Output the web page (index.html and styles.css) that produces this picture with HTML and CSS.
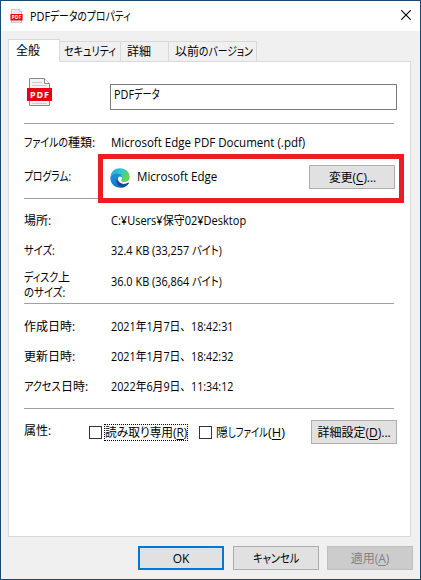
FILE: index.html
```html
<!DOCTYPE html>
<html lang="ja">
<head>
<meta charset="utf-8">
<title>PDFデータのプロパティ</title>
<link rel="stylesheet" href="styles.css">
</head>
<body>
<svg class="defs" width="0" height="0">
  <symbol id="pdf" viewBox="0 0 25 28">
    <path d="M2.500.5h15l5 5v22h-20z" fill="#f4f4f4" stroke="#888"/>
    <path d="M17.500.5v5h5" fill="#fff" stroke="#888"/>
    <path d="M5 4.500h10M5 7.500h15M5 25.500h15" stroke="#ccc"/>
    <path d="M0 10h25v13H0z" fill="#e60012"/>
    <text x="3" y="20" textLength="19" lengthAdjust="spacing" class="pdf-word">PDF</text>
  </symbol>
</svg>
<main class="window">
  <header class="titlebar">
    <svg class="title-icon" viewBox="0 0 25 28"><use href="#pdf"/></svg>
    <h1><span class="fit" data-w="20">PDF</span><span class="fit" data-w="81">データのプロパティ</span></h1>
    <svg class="close" viewBox="0 0 10 10"><path d="M.3.3l9.400 9.400M9.700.3L.3 9.700" stroke="#000" stroke-width="1.100"/></svg>
  </header>
  <nav class="tabs">
    <span class="tab active"><span class="fit" data-w="24">全般</span></span>
    <span class="tab security"><span class="fit" data-w="52">セキュリティ</span></span>
    <span class="tab details"><span class="fit" data-w="24">詳細</span></span>
    <span class="tab versions"><span class="fit" data-w="24">以前</span><span class="fit" data-w="54">のバージョン</span></span>
  </nav>
  <section class="panel">
    <div class="file">
      <svg class="file-icon" viewBox="0 0 25 28"><use href="#pdf"/></svg>
      <div class="name"><span class="fit" data-w="20">PDF</span><span class="fit" data-w="26">データ</span></div>
    </div>
    <div class="group kind">
      <div class="row type"><span class="label"><span class="fit" data-w="44">ファイルの</span><span class="fit" data-w="27">種類:</span></span><span class="fit" data-w="194">Microsoft Edge PDF Document (.pdf)</span></div>
      <div class="row program"><span class="label"><span class="fit" data-w="47">プログラム:</span></span>
        <svg class="edge" viewBox="0 0 20 20">
          <defs>
            <linearGradient id="top" x1="0" y1="0" x2="1" y2=".5"><stop offset="0" stop-color="#1ba5dc"/><stop offset=".5" stop-color="#30c5ce"/><stop offset="1" stop-color="#67d64b"/></linearGradient>
            <linearGradient id="left" x1="0" y1="0" x2=".6" y2="1"><stop offset="0" stop-color="#1a96dc"/><stop offset="1" stop-color="#1270c4"/></linearGradient>
          </defs>
          <path d="M.4 9C1 3.500 5 .3 10 .3c5.700 0 9.700 4 9.700 8.500 0 3.400-2.300 5.200-5.100 5.200-2.200 0-3.900-.8-3.400-1.600 1.500-2.100.8-5.500-2.600-6C5 6 1.500 7 .4 9z" fill="url(#top)"/>
          <path d="M.3 10C.5 7 3.800 5.200 7.400 5.400c2.900.1 4.800 2 4.700 4.300-.1 1.200-.6 1.900-1 2.600-.8 1.900 3.300 3.800 7.300 2.500.5-.1.600.2.400.5C17 18.200 13.800 19.800 10.500 19.800 4.800 19.800.2 15.500.3 10z" fill="url(#left)"/>
          <path d="M7.200 10.200c-1 1.800-1.200 4.800 1 7 1.300 1.300 3 2.200 4.700 2.200 2.400-.6 4.600-2 5.900-4.100.3-.5-.1-.8-.6-.6-4.700 1.800-8.500-.3-8-2.200-1.300-.1-2.500-.9-3-2.300z" fill="#124c9c"/>
          <path d="M9.500 8.500c-1.700.5-2.300 2.700-1 4.600 1.600 2.300 5 3.700 8.700 2.400-3 0-6.300-1.300-6.100-3 .1-.6.900-1.300.9-2.500 0-1-1.200-1.900-2.500-1.500z" fill="#fff"/>
        </svg>
        <span class="fit" data-w="80">Microsoft Edge</span>
        <button class="change"><span class="fit" data-w="47">変更(<u>C</u>)...</span></button>
        <i class="highlight"></i>
      </div>
    </div>
    <div class="group storage">
      <div class="row"><span class="label"><span class="fit" data-w="27">場所:</span></span><span class="fit" data-w="135">C:¥Users¥保守02¥Desktop</span></div>
      <div class="row size"><span class="label"><span class="fit" data-w="31">サイズ:</span></span><span class="fit" data-w="81">32.4 KB (33,257 </span><span class="fit" data-w="30">バイト)</span></div>
      <div class="row disk"><span class="label"><span class="fit" data-w="34">ディスク</span><span class="fit" data-w="12">上</span><br><span class="fit" data-w="41">のサイズ:</span></span><span class="fit" data-w="81">36.0 KB (36,864 </span><span class="fit" data-w="30">バイト)</span></div>
    </div>
    <div class="group dates">
      <div class="row"><span class="label"><span class="fit" data-w="51">作成日時:</span></span><span class="fit day" data-w="80">2021年1月7日、</span><span class="fit" data-w="42">18:42:31</span></div>
      <div class="row"><span class="label"><span class="fit" data-w="51">更新日時:</span></span><span class="fit day" data-w="80">2021年1月7日、</span><span class="fit" data-w="42">18:42:32</span></div>
      <div class="row"><span class="label"><span class="fit" data-w="37">アクセス</span><span class="fit" data-w="27">日時:</span></span><span class="fit day" data-w="80">2022年6月9日、</span><span class="fit" data-w="42">11:34:12</span></div>
    </div>
    <div class="attributes">
      <span class="attr-label"><span class="fit" data-w="27">属性:</span></span>
      <span class="box"></span><span class="focus"><span class="fit" data-w="82">読み取り専用(<u>R</u>)</span></span>
      <span class="box hidden-box"></span><span class="hidden-label"><span class="fit" data-w="12">隠</span><span class="fit" data-w="40">しファイル</span><span class="fit" data-w="17">(<u>H</u>)</span></span>
      <button class="advanced"><span class="fit" data-w="73">詳細設定(<u>D</u>)...</span></button>
    </div>
  </section>
  <footer>
    <button class="ok"><span class="fit" data-w="17">OK</span></button>
    <button><span class="fit" data-w="46">キャンセル</span></button>
    <button class="apply"><span class="fit" data-w="39">適用(<u>A</u>)</span></button>
  </footer>
</main>
<script src="fit.js"></script>
</body>
</html>
```
FILE: styles.css
```css
* { box-sizing: border-box; }
body {
  margin: 0;
  font: 12px/15px "Open Sans", "Noto Sans CJK JP", sans-serif;
  font-feature-settings: "palt";
  color: #000;
}
.defs { position: absolute; }
.window {
  width: 421px;
  height: 580px;
  border: 1px solid #194a73;
  background: #f0f0f0;
  overflow: hidden;
}
.fit { display: inline-block; white-space: pre; flex: none; }
.fit > span { display: inline-block; transform-origin: 0 50%; }
.day { font-feature-settings: normal; }
.pdf-word { font: bold 9px "Noto Sans", sans-serif; fill: #fff; }
u { text-underline-offset: 2px; text-decoration-thickness: 1px; text-decoration-skip-ink: none; }

.titlebar { display: flex; align-items: center; height: 30px; padding: 0 9px; background: #fff; }
.title-icon { width: 13px; height: 14px; margin-right: 7px; }
h1 { margin: 0; font: inherit; }
.close { width: 10px; height: 10px; margin: 0 0 2px auto; }

.tabs { display: flex; align-items: flex-end; height: 31px; padding-left: 7px; position: relative; }
.tab {
  height: 21px;
  border: 1px solid #d9d9d9;
  border-left: 0;
  display: flex;
  align-items: center;
  padding-left: 5px;
}
.active { width: 52px; height: 23px; border-left: 1px solid #d9d9d9; border-bottom-color: #fff; background: #fff; padding: 0 0 1px 7px; }
.security { width: 61px; padding-left: 4px; }
.details { width: 48px; padding-left: 6px; }
.versions { width: 88px; padding-left: 6px; }

.panel { width: 403px; height: 476px; margin: -1px 0 0 7px; border: 1px solid #d9d9d9; background: #fff; padding: 0 15px; }
.file { display: flex; height: 61px; padding: 16px 0 0 3px; }
.file-icon { width: 25px; height: 28px; flex: none; }
.name { flex: none; width: 287px; height: 26px; margin: 6px 0 0 58px; border: 1px solid #7a7a7a; padding: 2px 3px; }
.group { width: 370px; border-top: 1px solid #a0a0a0; }
.row { display: flex; align-items: center; height: 30px; }
.label { width: 87px; flex: none; white-space: nowrap; }
.type { height: 36px; }
.kind { height: 75px; }
.program { height: 32px; position: relative; }
.edge { width: 20px; height: 20px; margin: 3px 7px 0 -1px; flex: none; }
.change { margin: 2px -1px 0 auto; }
.highlight { position: absolute; left: 74px; top: -6px; width: 306px; height: 49px; border: 5px solid #ed1c24; }
.storage { height: 105px; padding-top: 6px; }
.size { height: 31px; }
.disk .label { margin-top: 7px; }
.dates { height: 105px; padding-top: 7px; }

button {
  flex: none;
  width: 86px;
  height: 24px;
  border: 1px solid #adadad;
  background: #e1e1e1;
  padding: 0;
  color: #000;
  font: inherit;
  font-feature-settings: inherit;
}
.attributes { width: 370px; border-top: 1px solid #a0a0a0; padding-top: 11px; display: flex; align-items: center; height: 36px; }
.attr-label { width: 65px; margin-top: -3px; }
.box { width: 13px; height: 13px; border: 1px solid #333; flex: none; }
.focus { display: flex; width: 84px; height: 17px; margin-left: 2px; border: 1px dotted #000; }
.hidden-box { margin-left: 11px; }
.hidden-label { display: flex; margin-left: 4px; }
.advanced { margin: 0 -3px 0 auto; }

footer { display: flex; margin: 9px 0 0 137px; gap: 9px; }
.ok { border: 2px solid #0078d7; }
.apply { margin-left: -1px; border-color: #bfbfbf; background: #ccc; color: #838383; }
```
FILE: fit.js
```js
// Condense each text run to the width its label is given.
document.querySelectorAll(".fit").forEach((el) => {
  const run = document.createElement("span");
  run.append(...el.childNodes);
  el.append(run);
  const width = Number(el.dataset.w);
  const natural = run.offsetWidth;
  el.style.width = width + "px";
  run.style.transform = `scaleX(${width / natural})`;
});
```
